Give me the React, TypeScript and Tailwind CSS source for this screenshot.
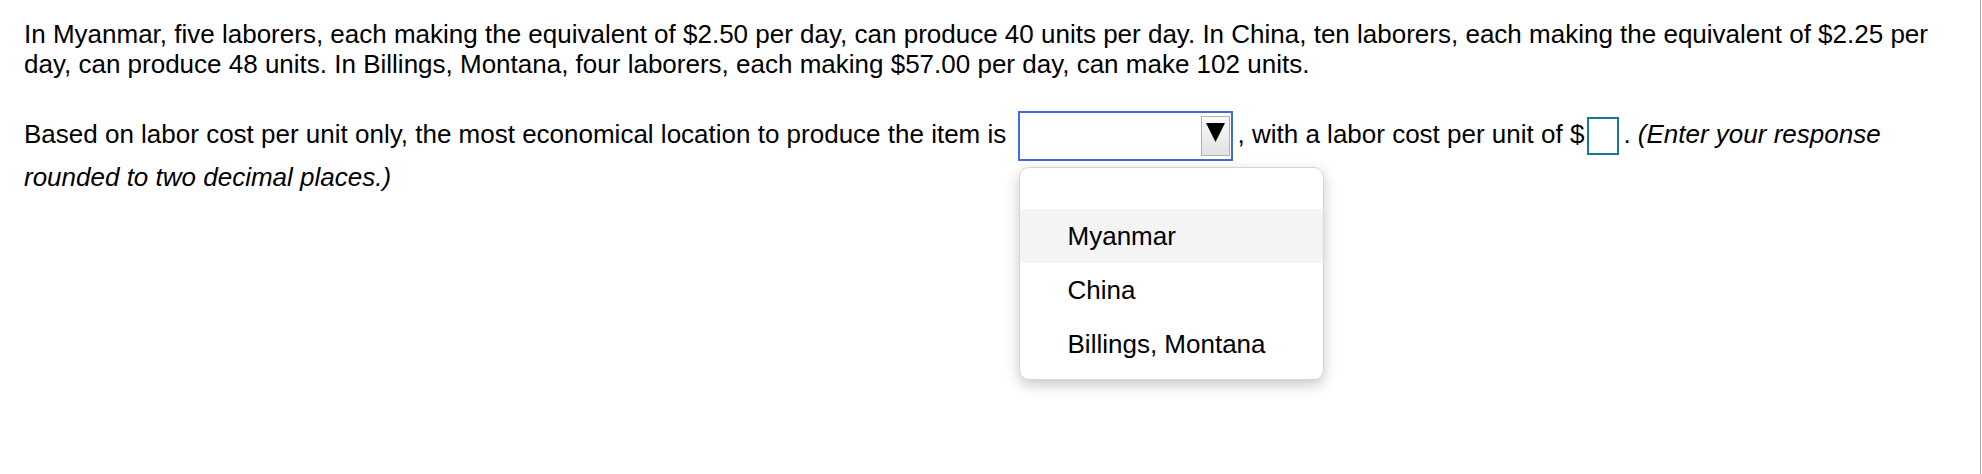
import React from "react";

export default function App() {
  return (
    <div className="relative w-[1982px] h-[474px] bg-white overflow-hidden" style={{ fontFamily: '"Liberation Sans", Arial, sans-serif' }}>
      <div className="absolute right-[1px] top-0 h-full w-[1px] bg-[#a8a8a8]" />
      <div className="w-[1932px] pl-[24px] pt-[19px] text-[26px] leading-[30px] text-black">
        <p>
          In Myanmar, five laborers, each making the equivalent of $2.50 per day, can produce 40 units per day. In China, ten laborers, each making the equivalent of $2.25 per day, can produce 48 units. In Billings, Montana, four laborers, each making $57.00 per day, can make 102 units.
        </p>
        <p className="mt-[31px]">
          Based on labor cost per unit only, the most economical location to produce the item is{" "}
          <span className="relative inline-block align-middle ml-[4px] mr-[5px] my-[1px]">
            <span className="flex items-start w-[215px] h-[50px] border-2 border-[#3b6fd1] bg-white">
              <span className="flex-1" />
              <span className="mt-[3px] mr-[1px] w-[29px] h-[40px] border border-[#b0b0b0] bg-gradient-to-b from-[#fafafa] to-[#e2e2e2] flex justify-center pt-[6px]">
                <svg width="19" height="20" viewBox="0 0 19 20">
                  <polygon points="0,0 19,0 9.5,19" fill="#000" />
                </svg>
              </span>
            </span>
            <span className="absolute left-[1px] top-[56px] w-[305px] h-[213px] rounded-[10px] border border-[#d6d6d6] bg-white shadow-[0_5px_14px_rgba(0,0,0,0.22)] flex flex-col z-10 text-[26px] leading-[30px]">
              <span className="h-[41px] shrink-0" />
              <span className="h-[54px] shrink-0 bg-[#f4f4f4] flex items-center pl-[48px]">Myanmar</span>
              <span className="h-[54px] shrink-0 flex items-center pl-[48px]">China</span>
              <span className="h-[54px] shrink-0 flex items-center pl-[48px]">Billings, Montana</span>
            </span>
          </span>
          , with a labor cost per unit of $
          <span className="inline-block align-middle w-[32px] h-[38px] border-2 border-[#1a7894] ml-[3px] mr-[4px] bg-white" />
          . <i>(Enter your response rounded to two decimal places.)</i>
        </p>
      </div>
    </div>
  );
}
